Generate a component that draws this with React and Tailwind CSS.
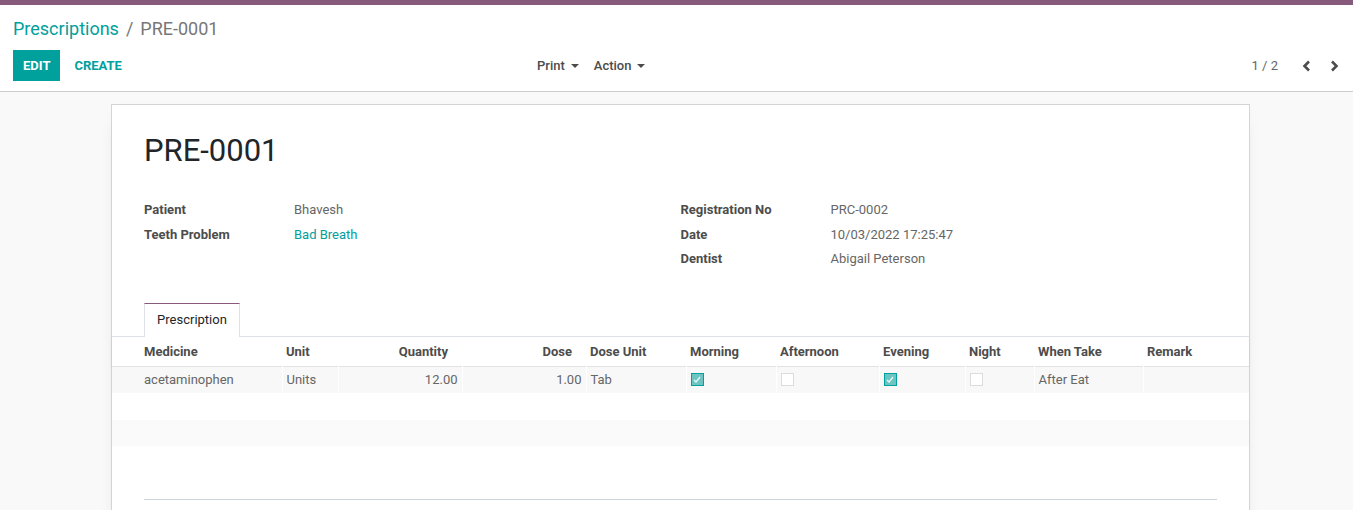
import React from "react";

const cols = [
  { key: "medicine", label: "Medicine", w: "w-[170px]" },
  { key: "unit", label: "Unit", w: "w-[56px]" },
  { key: "qty", label: "Quantity", w: "w-[124px]", right: true },
  { key: "dose", label: "Dose", w: "w-[124px]", right: true },
  { key: "doseUnit", label: "Dose Unit", w: "w-[100px]" },
  { key: "morning", label: "Morning", w: "w-[90px]" },
  { key: "afternoon", label: "Afternoon", w: "w-[103px]" },
  { key: "evening", label: "Evening", w: "w-[86px]" },
  { key: "night", label: "Night", w: "w-[69px]" },
  { key: "when", label: "When Take", w: "w-[109px]" },
  { key: "remark", label: "Remark", w: "w-[106px]" },
];

const row = {
  medicine: "acetaminophen",
  unit: "Units",
  qty: "12.00",
  dose: "1.00",
  doseUnit: "Tab",
  morning: true,
  afternoon: false,
  evening: true,
  night: false,
  when: "After Eat",
  remark: "",
};

function Check({ on }) {
  if (on) {
    return (
      <span className="flex h-[13px] w-[13px] items-center justify-center border border-[#00A09D] bg-[#6cc5c3]">
        <svg width="8" height="7" viewBox="0 0 8 7">
          <polyline points="1,4 3,6 7,1" fill="none" stroke="#e6f6f5" strokeWidth="1.4" />
        </svg>
      </span>
    );
  }
  return <span className="block h-[13px] w-[13px] border border-[#dcdcdc] bg-white" />;
}

function Caret() {
  return (
    <span className="ml-[6px] inline-block h-0 w-0 border-l-[4px] border-r-[4px] border-t-[4px] border-l-transparent border-r-transparent border-t-[#4c4c4c] align-middle" />
  );
}

function Field({ label, value, link }) {
  return (
    <div className="flex leading-[24.5px]">
      <div className="w-[150px] font-bold text-[#4c4c4c]">{label}</div>
      <div className={link ? "text-[#00A09D]" : "text-[#666]"}>{value}</div>
    </div>
  );
}

export default function App() {
  return (
    <div className="min-h-[510px] bg-[#f9f9f9] font-['Roboto',sans-serif] text-[13px] text-[#4c4c4c]">
      <div className="h-[5px] bg-[#875A7B]" />

      {/* control panel */}
      <div className="border-b border-[#ccc] bg-white pb-[10px] pl-[13px] pr-[14px] pt-[11px]">
        <div className="flex h-[24px] items-center text-[18px]">
          <span className="text-[#00A09D]">Prescriptions</span>
          <span className="mx-[7px] text-[#777]">/</span>
          <span className="text-[#777]">PRE-0001</span>
        </div>
        <div className="mt-[10px] flex h-[31px] items-center">
          <div className="flex w-[524px] items-center">
            <button className="h-[31px] bg-[#00A09D] px-[10px] text-[13px] font-bold text-white">EDIT</button>
            <button className="ml-[4px] h-[31px] px-[10px] text-[13px] font-bold text-[#00A09D]">CREATE</button>
          </div>
          <div className="flex items-center font-medium">
            <span className="flex items-center">Print<Caret /></span>
            <span className="ml-[15px] flex items-center">Action<Caret /></span>
          </div>
          <div className="ml-auto flex items-center">
            <span className="text-[#666]">1 / 2</span>
            <svg className="ml-[24px]" width="9" height="12" viewBox="0 0 9 12">
              <polyline points="7,1.5 2.5,6 7,10.5" fill="none" stroke="#4c4c4c" strokeWidth="2.6" />
            </svg>
            <svg className="ml-[19px]" width="9" height="12" viewBox="0 0 9 12">
              <polyline points="2,1.5 6.5,6 2,10.5" fill="none" stroke="#4c4c4c" strokeWidth="2.6" />
            </svg>
          </div>
        </div>
      </div>

      {/* sheet */}
      <div className="ml-[111px] mt-[12px] w-[1139px] border border-[#d4d4d4] bg-white pb-[10px] shadow-[0_5px_20px_-15px_rgba(0,0,0,0.4)]">
        <div className="px-[32px] pt-[27px]">
          <h1 className="text-[31px] leading-[38px] text-[#212529]">PRE-0001</h1>
          <div className="mt-[28px] grid grid-cols-2">
            <div>
              <Field label="Patient" value="Bhavesh" />
              <Field label="Teeth Problem" value="Bad Breath" link />
            </div>
            <div>
              <Field label="Registration No" value="PRC-0002" />
              <Field label="Date" value="10/03/2022 17:25:47" />
              <Field label="Dentist" value="Abigail Peterson" />
            </div>
          </div>
        </div>

        <div className="mt-[31px] flex border-b border-[#dee2e6] pl-[32px]">
          <div className="-mb-px flex h-[34px] w-[96px] items-center justify-center border-x border-t border-[#dee2e6] border-t-[#875A7B] bg-white text-[#212529]">
            Prescription
          </div>
        </div>

        <table className="w-full table-fixed border-collapse">
          <colgroup>
            {cols.map((c) => (
              <col key={c.key} className={c.w} />
            ))}
          </colgroup>
          <thead>
            <tr className="h-[30px] border-b border-[#e2e2e2] shadow-[0_1px_2px_rgba(0,0,0,0.06)]">
              {cols.map((c, i) => (
                <th
                  key={c.key}
                  className={
                    "font-bold text-[#4c4c4c] " +
                    (i === 0 ? "pl-[32px] text-left" : c.right ? "pr-[14px] text-right" : "pl-[4px] text-left")
                  }
                >
                  {c.label}
                </th>
              ))}
            </tr>
          </thead>
          <tbody>
            <tr className="h-[26px] bg-[#f8f8f8]">
              {cols.map((c, i) => {
                const v = row[c.key];
                return (
                  <td
                    key={c.key}
                    className={
                      "text-[#666] " +
                      (i === 0 ? "pl-[32px]" : "border-l border-white ") +
                      (c.right ? " pr-[4px] text-right" : i === 0 ? "" : " pl-[4px]")
                    }
                  >
                    {typeof v === "boolean" ? <Check on={v} /> : v}
                  </td>
                );
              })}
            </tr>
            <tr className="h-[27px]">
              <td colSpan={11} />
            </tr>
            <tr className="h-[26px] bg-[#fafafa]">
              <td colSpan={11} />
            </tr>
          </tbody>
        </table>

        <div className="mx-[32px] mt-[53px] border-t border-[#ced4da]" />
        <div className="h-[40px]" />
      </div>
    </div>
  );
}
